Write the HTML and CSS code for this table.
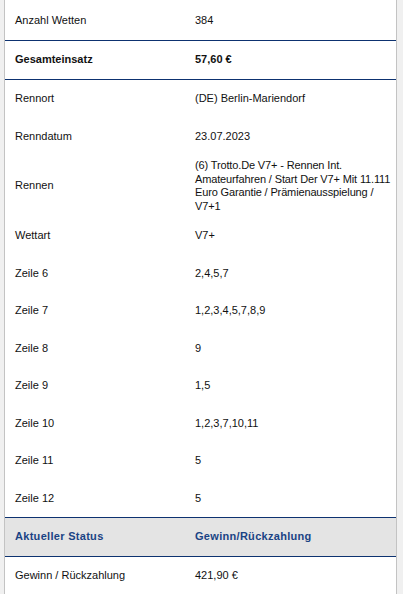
FILE: index.html
```html
<!DOCTYPE html>
<html lang="de">
<head>
<meta charset="utf-8">
<title>Wettdetails</title>
<link rel="stylesheet" href="styles.css">
</head>
<body>
<div class="panel">
  <div class="row sep"><div class="label">Anzahl Wetten</div><div class="value">384</div></div>
  <div class="row sep strong"><div class="label">Gesamteinsatz</div><div class="value">57,60 €</div></div>
  <div class="row"><div class="label">Rennort</div><div class="value">(DE) Berlin-Mariendorf</div></div>
  <div class="row"><div class="label">Renndatum</div><div class="value">23.07.2023</div></div>
  <div class="row"><div class="label">Rennen</div><div class="value tight">(6) Trotto.De V7+ - Rennen Int. Amateurfahren / Start Der V7+ Mit 11.111 Euro Garantie / Prämienausspielung / V7+1</div></div>
  <div class="row"><div class="label">Wettart</div><div class="value">V7+</div></div>
  <div class="row"><div class="label">Zeile 6</div><div class="value">2,4,5,7</div></div>
  <div class="row"><div class="label">Zeile 7</div><div class="value">1,2,3,4,5,7,8,9</div></div>
  <div class="row"><div class="label">Zeile 8</div><div class="value">9</div></div>
  <div class="row"><div class="label">Zeile 9</div><div class="value">1,5</div></div>
  <div class="row"><div class="label">Zeile 10</div><div class="value">1,2,3,7,10,11</div></div>
  <div class="row"><div class="label">Zeile 11</div><div class="value">5</div></div>
  <div class="row"><div class="label">Zeile 12</div><div class="value">5</div></div>
  <div class="row head"><div class="label">Aktueller Status</div><div class="value">Gewinn/Rückzahlung</div></div>
  <div class="row"><div class="label">Gewinn / Rückzahlung</div><div class="value">421,90 €</div></div>
</div>
</body>
</html>
```
FILE: styles.css
```css
html, body {
  margin: 0;
  padding: 0;
  background: #f0f0f0;
}
body {
  font-family: "Liberation Sans", Arial, sans-serif;
  font-size: 11px;
  line-height: 13.5px;
  color: #111;
}
.panel {
  margin-left: 4px;
  width: 391px;
  border-left: 1px solid #c3c3c3;
  border-right: 1px solid #c3c3c3;
  background: #fff;
  padding-top: 2px;
  min-height: 600px;
}
.row {
  display: flex;
  align-items: center;
  box-sizing: border-box;
  min-height: 37.5px;
  padding: 4px 0;
}
.label {
  width: 180px;
  padding-left: 10px;
  flex: none;
}
.value {
  flex: 1;
  min-width: 0;
}
.tight {
  letter-spacing: -0.14px;
}
.sep {
  min-height: 39px;
  border-bottom: 1px solid #0d3270;
}
.strong {
  font-weight: bold;
}
.head {
  min-height: 40px;
  background: #e4e4e4;
  border-top: 1px solid #0d3270;
  border-bottom: 1px solid #0d3270;
  color: #1a4384;
  font-weight: bold;
  letter-spacing: 0.3px;
}
```
